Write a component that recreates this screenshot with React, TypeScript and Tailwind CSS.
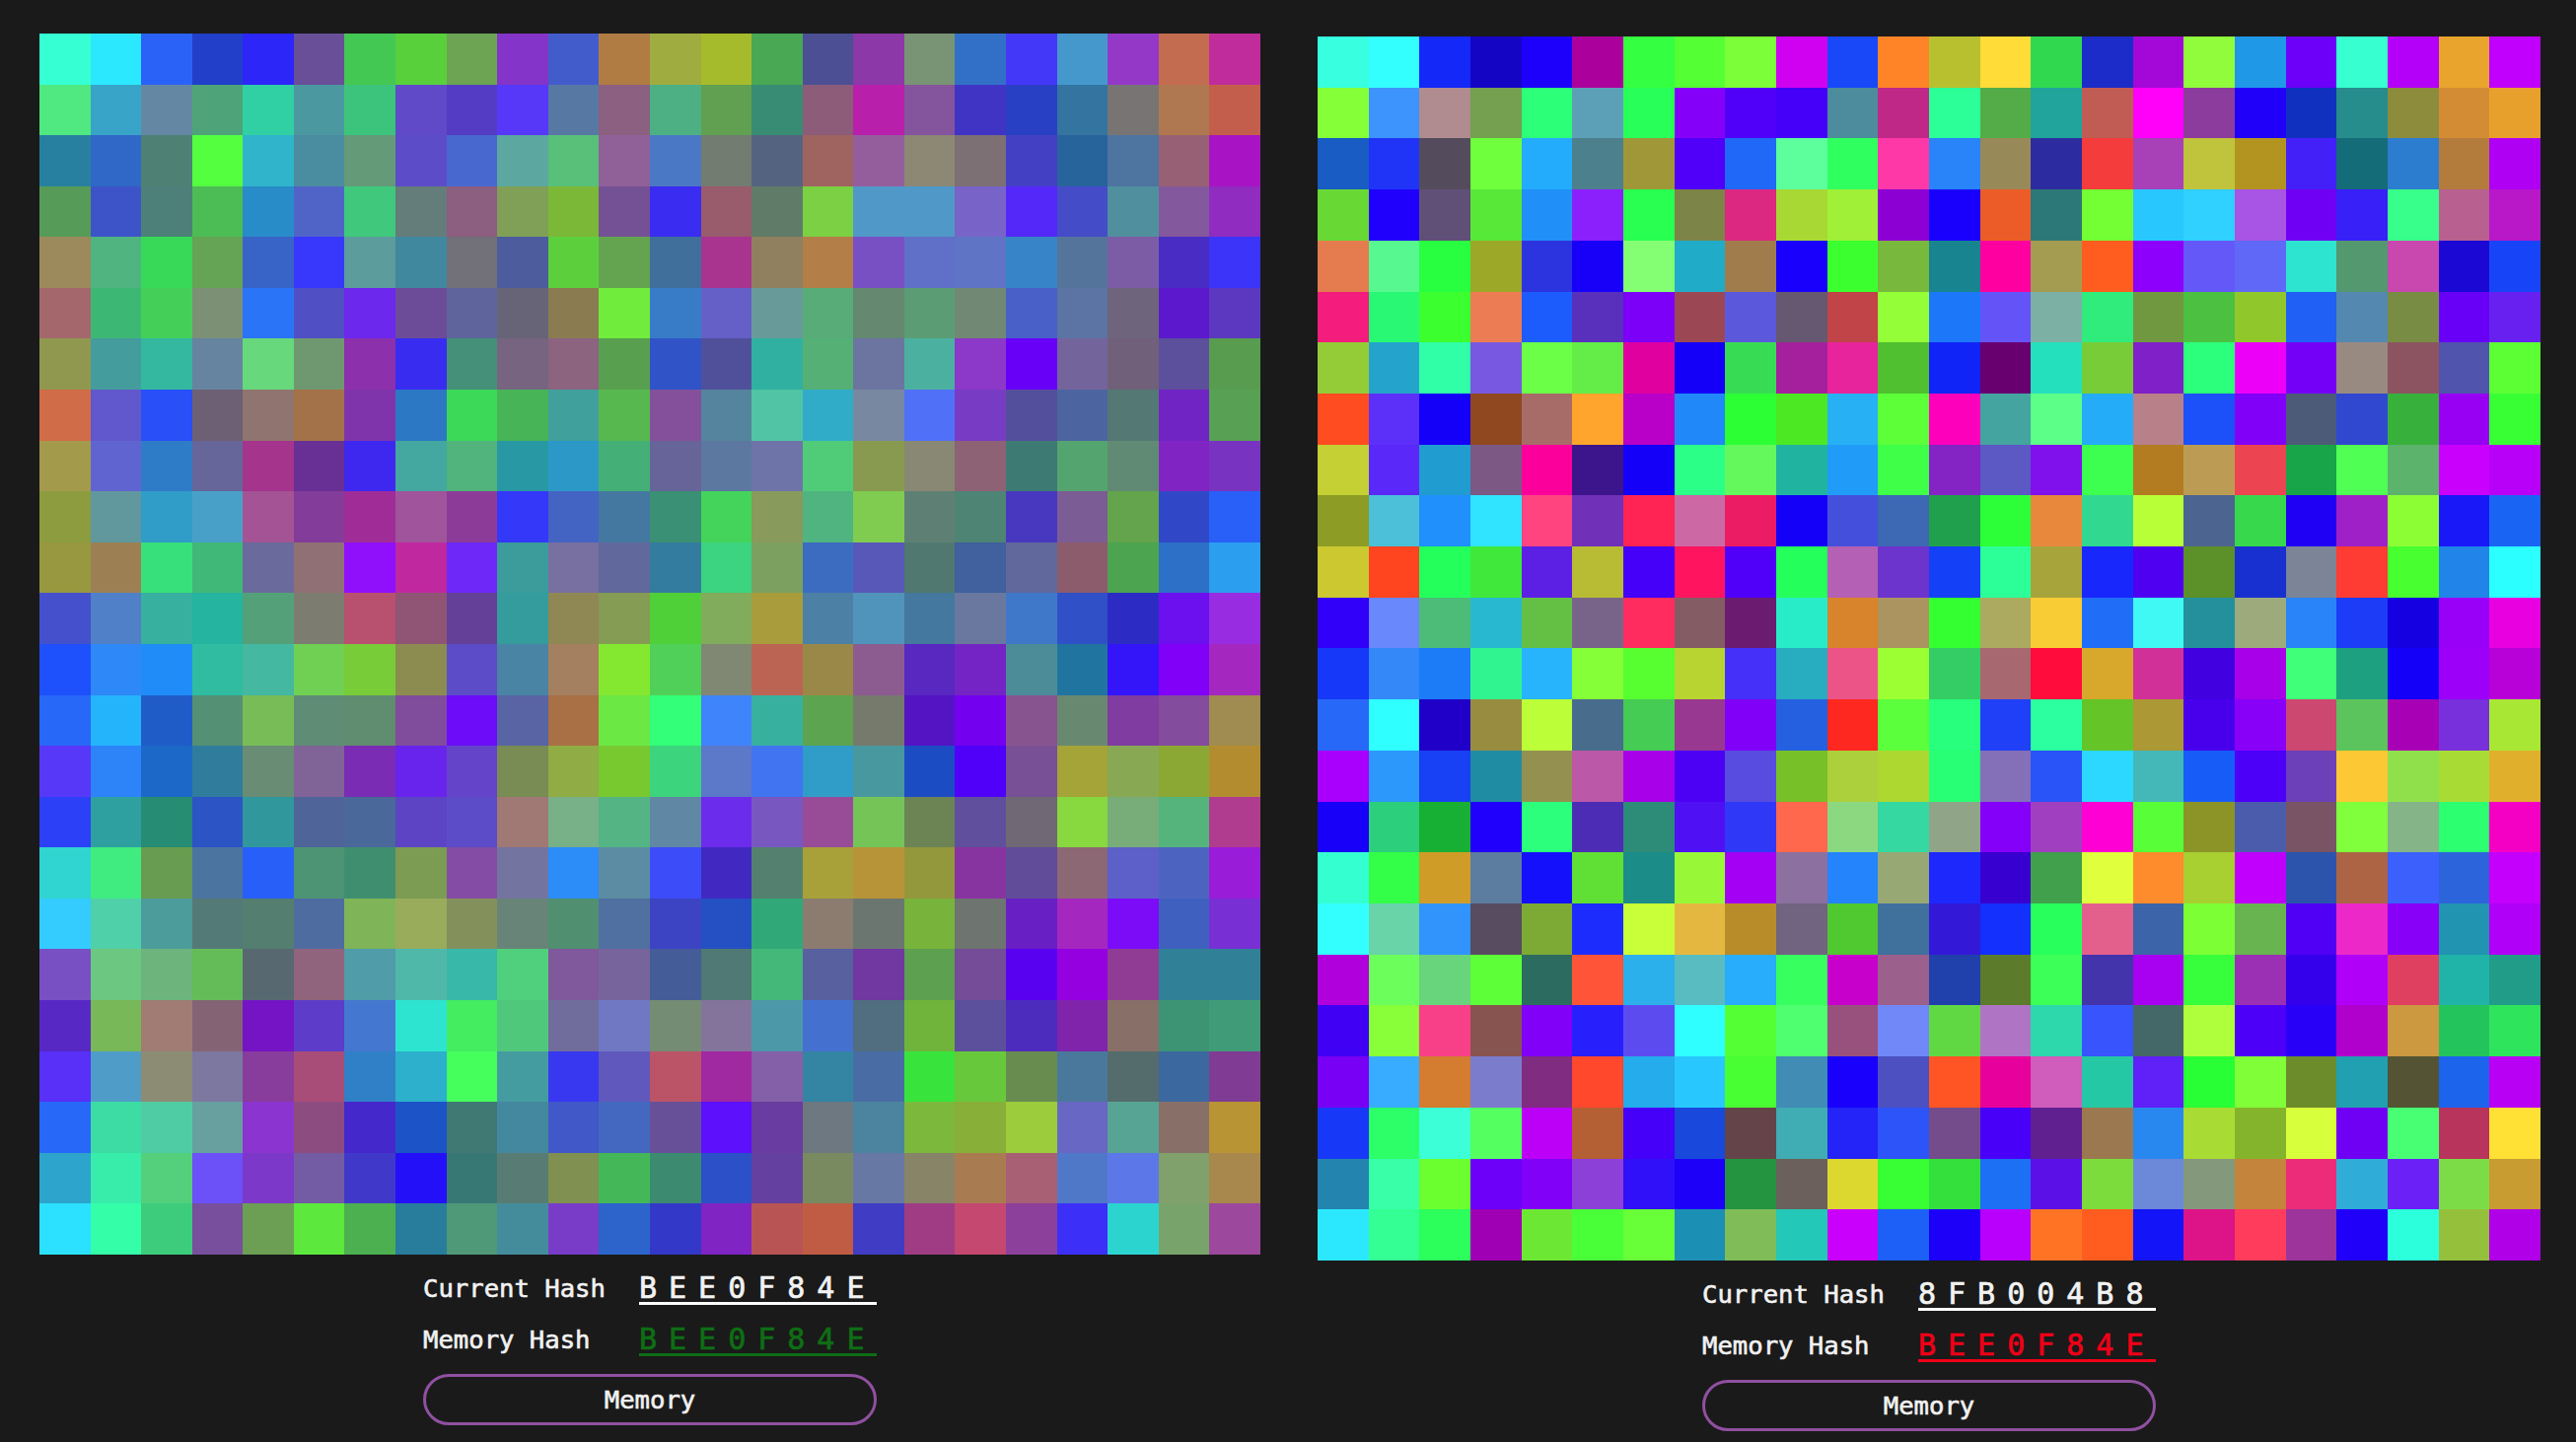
import React from "react";

const leftRows = [
  "36ffd4 2ce8ff 2a62f8 213fc8 2d26f8 684f98 44c854 58d03c 6ca454 8434c8 425ccc b07c44 9fac40 a6bb2c 48a854 4c4f94 8c38a8 789474 3270c8 4438f8 4498cc 9438c8 c46c50 c02c9c",
  "50e880 38a4c8 6488a4 4ea478 30d0a4 4c98a0 3cc47c 604ac8 543cc4 5838f8 5878a4 8c6080 4cb084 60a050 388c74 8c5c78 b820ac 84549c 4034c4 2840c4 3474a0 787474 b07850 c45e4c",
  "2880a0 3068c8 4e8074 54ff40 30b4cc 4a8ca0 649a78 5c4cc8 4868d0 5ca8a0 58c078 906098 4a78c4 727c70 546480 a06460 945e9c 8c8874 7c7074 4440c4 28649c 4e74a0 986074 a814c4",
  "569c58 3c54c8 4c8078 4cbc54 288cc8 5064c8 40c87c 647c7a 8c5e80 80a058 7cb838 745094 3a2cf0 985c6c 607c68 7cd044 5098c8 5098c8 7864c8 5428f8 444cc8 50909e 84589c 902cc0",
  "9c8a5c 50b480 38d858 64a454 3864c8 3838fc 5c9c9c 40889e 727078 4c5c9c 5cd03c 64a450 406f9c a83490 90805f b47e48 7850c4 6070c8 5f74c4 3884c8 54749c 7c5ca4 482cc4 3c34f8",
  "a4686c 3cb874 44d058 7c9076 2a74f8 5050c4 6c28ec 6c4c98 60649c 686478 8a7c50 70ec3c 387cc8 6460c8 689a9a 58ac78 648870 5c9c74 708874 4860c8 5c74a4 6e647c 5c18cc 5c38c0",
  "909850 449c9c 34b8a0 6684a0 68d87c 709870 8c30ac 382cf0 449078 766480 8c6480 58a050 3054c8 50509a 30b0a0 54b074 6c74a0 4cb0a0 8c38c8 6800f8 74649c 70607a 5c509c 589c50",
  "d06c48 6058cc 284ff8 6e6074 907470 a47248 8034ac 2c78c4 3cd858 48b458 40a09c 58b850 84509c 54849e 50c4a4 30acc8 7888a0 5070f8 783cc4 544f9c 4c64a0 547874 7024c4 58a054",
  "a49a4c 6064d0 2e7cc8 66669a a4348c 683094 3e28f0 44a8a0 50b47c 2898a4 2c98c8 44b078 666498 5c78a0 6e74a8 50cc78 889a50 888874 8c6274 3e7a74 54a470 608a74 8024c4 7834c0",
  "8c9c3e 60989e 309cc8 48a0c8 a45494 843c9a a02c98 a0549c 8c3c98 3438f8 4464c4 4478a0 3a9074 44d45c 889a5c 50b480 80cc50 5e8074 4e8474 4838c0 7c5c94 64a44c 3048c8 2860f8",
  "989840 9c8054 38e07c 40b878 6a6a9c 907074 9010fc c028a0 6e28f8 3c9c9c 7870a0 60689c 347c9f 3cd480 7ca060 3c6cc0 5858b8 507870 40609e 60689c 8c5c6c 4ca450 2c70c8 2c9ef0",
  "4450cc 5080c8 38b0a0 24b4a0 54a078 7c7c70 b85070 905474 644098 349c9c 908854 849c54 50d038 80ac5c a89c3c 4c80a4 5094bc 44789e 6a78a0 3f78c8 3050c8 2c2cc4 6c10f0 982ce0",
  "1e50fc 2e88f8 208cf8 30bca0 44b8a0 70d054 78cc38 8c8c50 5c4cc8 4a84a4 a48060 84e830 50d058 808874 bc6454 9a8848 8c5c90 5828c0 7424c4 4c8c98 2074a0 3414f8 8000f8 a428c0",
  "2868f8 24b4fc 205cc8 549074 78bc58 5e8c74 608c70 804c9c 6c0cf8 5864a4 a87044 6ce844 34ff78 4084fc 38b0a0 5ca450 767a6c 5414c4 7400f0 885490 688870 803ca0 844c9c a08c50",
  "5838f8 2c84f8 1c68c8 307c9c 688c74 806498 7a2cb4 6824ec 6444c8 788c54 90ac44 78c830 3cd47c 5c78c8 4074f0 309cc8 48989f 1c4cc4 5000f8 785096 a4a438 88a854 8ca834 b48c30",
  "2c40f8 2ea0a0 268c74 2c54c4 30989c 4f6498 4a689a 5c44c4 5c4cc8 a07874 78b088 54b484 6088a4 6c2cec 7858c0 984c98 74c458 6c8454 604f9c 706874 88d840 78ac78 54b47c b03c90",
  "30d4d0 40ec80 689c50 4c74a0 285ff8 4c9474 408e70 7c9c54 844ca4 7474a0 2c8cf8 5c8ca4 3c4cf8 4028c0 548070 a8a038 b89438 94983c 8834a0 604c98 8c6874 5c60c8 4c64c0 981cd8",
  "34ccff 50d0a8 4c9c9c 547a78 547e70 4f6ca0 80b458 98ac5c 84905c 688478 509070 4f70a0 3c44c4 2450c4 30a878 8c7c70 6c7670 78b43c 6e7470 6820c4 a428c0 7c0cf8 4060c0 7830d4",
  "7850c4 6cc880 6cb47c 64bc58 586870 90647c 509ca8 50b8a8 38b8a8 50d07c 80589c 78649c 445c98 507874 44b878 58609f 7038a0 5ca050 744c98 5800f0 9400e0 903c94 308098 308098",
  "5828c4 78b858 a07c74 846474 7414c4 5c3cc8 4478d0 2ce4d0 44ec60 50c87c 706c9c 7078c4 748c74 84749c 4c98a8 4470d0 506e80 70b43c 5c4f9c 4c2cbc 8024ac 887068 3c9474 409c78",
  "5830f8 509cc8 8c8c74 7c78a0 883c9c a84c78 3080c8 2cb0cc 44ff5c 449ca0 3838f0 6058bc bc5468 a028a0 8460a8 3484a4 4a6ca4 38e43c 68c83c 688c50 4a789c 546c6c 3c68a0 803c94",
  "2868f8 3cdca4 50cca4 68a0a0 8c34d0 8c4c80 4428cc 1c54c8 407874 44889f 4058c8 4468c0 685098 5c10fc 683ca0 6e7880 4c84a0 7cb83c 88b038 9ccc3c 6868c4 58a494 887068 b89434",
  "2ca4cc 38ecaa 54d07c 6c50f8 7c38c8 745ca4 4038c8 2410f8 387874 587c74 809050 44b858 3c8a70 2c50c8 6440a0 7a8a60 6878a4 888468 a87c50 a86074 5078c8 5c78e8 80a06c a8884c",
  "2ce0ff 34ffa8 3ccc7c 784f9c 6c9e54 5ce83c 4cb050 287c9c 4f9878 448c9c 783cc8 2c64cc 3438c8 8024c4 b85454 c05c44 403cc4 a03c84 c44870 8c409c 3c30f8 2cd4d0 78a46c 9c489c",
];

const rightRows = [
  "38ffe0 34ffff 1428f8 1404c4 1c00fc ac009c 34ff40 54ff34 7cff38 d000f0 1848f8 ff8428 b8c030 ffdc38 30d850 1c2cc8 a408d8 90fc3c 2098e8 6c00f8 38ffd0 b400f8 e8a42c c000fc",
  "84ff38 3c94fc b08c90 74a050 2cff78 5ca0b8 28ff58 8400f8 5000f8 4400f8 4c8c9c c02888 2cff98 54ac48 20a49c c05c54 ff00f8 8c3c9c 2000f8 1030c0 268c8c 8c8c3c d48c34 e8a02c",
  "185cc4 2034f8 544c5c 70ff3c 24acfc 4c808c a09838 5000f8 2068f8 5cff9c 30ff60 ff38a8 2884f8 988a58 2c2ca0 f43c3c a840b8 c0c43c b49420 4420f8 146c78 2c7cd0 b47c3c b000f4",
  "68d834 2000fc 605078 58e838 2090f8 8c20fc 28ff50 7c8448 dc2880 a8d834 a0f038 8c00d4 1800fc ec5c28 2c7878 74ff34 28c8ff 30d0ff a854e4 7000f4 3820f8 38ff8c b86090 b818c8",
  "e47c50 58f890 28ff40 9ca828 2c34e0 1800f8 84ff74 20acc8 a07c4c 1800fc 3cff30 78b83c 188490 ff00a0 a49c50 ff5c20 8c00fc 6458f8 6068f8 2ce4d0 549870 c848b0 1c08d4 1844f8",
  "f41c7c 28f874 3cff30 ec7c54 1c5cfc 5830bc 7c00f8 9c4854 5c58dc 665870 c04448 94ff38 1c78f8 6454f8 7cb0a4 30ec7c 709840 4cc040 90c82c 2060f4 5488b0 788c44 6800f8 6820f0",
  "94cc38 24a4cc 30ffa8 7858e0 6cff48 64ec48 e000a0 1400f8 38dc54 a4209c e8249c 50c030 1024f8 680070 24e0bc 78cc38 8020c8 2cff7c ec00f8 7400f8 988a80 8c5460 5054ac 5cff34",
  "ff4c20 5c30f8 1400f8 904820 a86c68 ffa42c b800c8 2088f8 2cff34 4ce824 28b0f4 5cff38 fc00bc 44a4a0 5cff88 24acf8 b88088 1c50f8 8000f8 4c5c78 3048d0 38b03c 9800f4 38ff34",
  "c4d034 5a28f8 209cd0 7c5884 fc009c 3c148c 1400f8 2cff88 64f85c 20b4a0 209cf8 40ff48 8424c4 5c58c4 8010ec 3cff50 b47c20 bc9c54 ec4450 18a448 50ff54 5cb46c c800fc b800f8",
  "8c9c24 4cc0d8 2090fc 30e4ff ff4480 7030b8 ff2454 cc68a4 ec1c64 1400f8 4450dc 3c68b4 20a04c 2cff38 e8883c 30d890 b8ff38 4c6490 38d84c 2000f4 a020c8 8cff34 1818f8 1a64f4",
  "ccc830 ff4420 24ff5c 40e83c 5c20e4 b8bc34 4400f8 ff1460 5000f8 24ff5c b460b4 6c34cc 1440f8 2cff98 a8a43c 1828fc 5000f0 5c9028 1830d0 7c8498 ff3c34 48ff30 2084e8 2cffff",
  "3000f8 6888fc 4cbc78 28b8d0 64c044 786488 ff2c60 845c64 6c1c70 28ecc8 d8842c ac9460 34ff30 acaa60 f8cc34 206ef8 40f8f4 24909c 9caa7c 2884f8 1c3cf8 1400e0 9800f8 e800e0",
  "1638f8 3488f8 1c7cf8 30f490 28b4fc 84ff38 58ff30 b8d430 4430f8 28acc0 ec5488 9cff34 34cc64 a86870 ff0c3c d8a82c d03098 4000e0 a800e8 40ff78 1ca080 1400f8 9c00f8 b800d8",
  "2868f8 30ffff 2000c8 988c40 bcff38 486c8c 44cc54 983890 8000f8 2460e0 ff2820 5cff3c 28ff7c 2040f8 2cffa0 64c428 ac9834 4800ec 8800f8 cc4870 5cc45c a800b4 7830dc a8e834",
  "a800fc 2c98fc 1840f4 208ca4 949050 bc58a8 a800e8 4c00f4 584ce0 78c028 acd03c acd830 28ff74 8470b8 2854f8 2cd8ff 44b8b8 185cf8 4c00f8 6c40b8 fcc834 90e04c a8dc34 e0b02c",
  "1800f8 2cd07c 18b034 2000fc 2cff7c 4c2cb4 2c8c78 5010f4 3038f8 ff684c 8cd880 34d8a0 90a488 8400f8 a040c0 ff00d4 58ff38 8c9428 4c5cac 785464 80ff3c 84b488 2cff70 f400c4",
  "34ffd0 34ff48 d09c28 5c7ca0 1410fc 60e034 1c8c88 98f838 a400f4 8c70a0 2484fc 98a874 1c28fc 3800d0 40a04c e0ff3c ff8c2c a8d030 c000fc 2c54ac ac6444 3c60fc 2c64dc c400fc",
  "34ffff 68d4a8 3094fc 584c60 7caa34 1c2cfc c8ff38 e4b840 b88c28 706480 50c830 40709c 3418d8 1430fc 28ff5c e4608c 3c64a8 7cff34 68b450 5000f4 ec28c8 8800f8 2094b0 b000f8",
  "b000dc 6cff5c 68d47c 5cff38 2c6c60 ff5438 2cb0ec 58bcc0 28acfc 38ff60 c800cc 9c608c 2040ac 5c7c2c 3cff58 4434ac a800f0 38ff3c 9c30b4 3400ec b000f8 e04060 20b4a8 209c88",
  "4000f4 88ff38 f84088 885450 8000f8 2820fc 5c4cf0 30ffff 54ff34 50ff70 98507c 7088f8 60d844 b074c4 2cd8ac 3854fc 446868 b0ff3c 4c00f8 2800f8 b000cc cc9840 24c45c 2ee45c",
  "7800f4 38acff d47c30 7c7ccc 802c80 ff482c 24acec 28c8ff 48ff34 408cb4 1800fc 4c50c0 ff5424 e8009c d05cbc 24c8a4 6020f8 28ff34 80ff38 6c8c2c 20a0b0 545434 1c64ec b800f4",
  "1838f8 2cff68 3cffd8 54ff60 bc00f8 b46034 4400f8 1848dc 644448 40acb4 2424f8 2c54f8 744c8c 4800f8 602090 9c7850 2888f0 a8dc34 84b42c d8ff3c 7000f4 48ff74 b8345c ffe034",
  "2484b0 38ffa8 6cff30 6c00f8 8000f8 8c40d8 3010f8 1c00f8 249440 6c605c dcd830 38ff34 34e03c 1c70f4 5c10e8 7cdc3c 6c88d8 84987c c4843c ec2c78 30acd8 6c20f8 7cdc48 c89c30",
  "2ce8ff 34ff94 2cff5c a000b4 6ce834 48ff38 68ff38 1c90b4 80bc58 24c8b8 c800fc 1c60f8 1c00f8 b800fc ff7424 ff5c20 1414f8 dc1488 ff3c5c 9c349c 2000f8 2cffdc 94c03c b000e8",
];

function Mosaic({ rows, className }: { rows: string[]; className: string }) {
  return (
    <div className={`grid grid-cols-[repeat(24,1fr)] grid-rows-[repeat(24,1fr)] ${className}`}>
      {rows.flatMap((row, y) =>
        row.split(" ").map((hex, x) => (
          <div key={`${y}-${x}`} style={{ backgroundColor: `#${hex}` }} />
        ))
      )}
    </div>
  );
}

function HashRow({
  label,
  hash,
  color,
  className,
}: {
  label: string;
  hash: string;
  color: string;
  className: string;
}) {
  return (
    <div className={`flex h-[40px] w-[460px] items-end justify-between ${className}`}>
      <span className="pb-[2px] text-[25.6px] leading-[30px] text-[#f2f2f2] [-webkit-text-stroke:0.6px_currentColor]">
        {label}
      </span>
      <span
        className={`w-[241px] border-b-[3px] text-[30px] leading-[29px] tracking-[12px] whitespace-nowrap [-webkit-text-stroke:0.7px_currentColor] ${color}`}
      >
        {hash}
      </span>
    </div>
  );
}

function Panel({
  rows,
  current,
  memory,
  memoryColor,
  className,
  gridClass,
}: {
  rows: string[];
  current: string;
  memory: string;
  memoryColor: string;
  className: string;
  gridClass: string;
}) {
  return (
    <div className={`flex flex-col items-center ${className}`}>
      <Mosaic rows={rows} className={gridClass} />
      <HashRow label="Current Hash" hash={current} color="border-white text-[#f2f2f2]" className="mt-[11px]" />
      <HashRow label="Memory Hash" hash={memory} color={memoryColor} className="mt-[12px]" />
      <button className="mt-[18px] h-[52px] w-[460px] rounded-full border-[3px] border-[#9050a0] pt-[1px] text-[25.6px] leading-none text-[#f2f2f2] [-webkit-text-stroke:0.6px_currentColor]">
        Memory
      </button>
    </div>
  );
}

export default function App() {
  return (
    <div className="flex h-[1462px] w-[2612px] items-start gap-[58px] overflow-hidden bg-[#1a1a1a] pl-[40px] font-['DejaVu_Sans_Mono',monospace]">
      <Panel
        rows={leftRows}
        current="BEE0F84E"
        memory="BEE0F84E"
        memoryColor="border-[#0e6e14] text-[#0e6e14]"
        className="pt-[34px]"
        gridClass="h-[1238px] w-[1238px]"
      />
      <Panel
        rows={rightRows}
        current="8FB004B8"
        memory="BEE0F84E"
        memoryColor="border-[#f00018] text-[#f00018]"
        className="pt-[37px]"
        gridClass="h-[1241px] w-[1240px]"
      />
    </div>
  );
}
